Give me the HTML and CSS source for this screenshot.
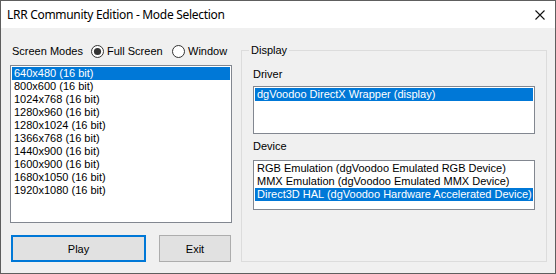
FILE: index.html
```html
<!DOCTYPE html>
<html lang="en">

<head>
    <meta charset="UTF-8">
    <title>LRR Community Edition - Mode Selection</title>
    <link rel="stylesheet" href="styles.css">
</head>

<body>

    <div class="window">
        <div class="titlebar">
            <span class="title">LRR Community Edition - Mode Selection</span>
            <svg class="close" width="10" height="10" viewBox="0 0 10 10">
                <path d="M0.5 0.5 L9.5 9.5 M9.5 0.5 L0.5 9.5" stroke="#111" stroke-width="1.1" fill="none" />
            </svg>
        </div>

        <div class="content">
            <div class="left">
                <div class="modes-head">
                    <span class="caption">Screen Modes</span>
                    <label class="radio wide">
                        <svg width="13" height="13" viewBox="0 0 13 13">
                            <circle cx="6.5" cy="6.5" r="6" fill="#fff" stroke="#333" stroke-width="1" />
                            <circle cx="6.5" cy="6.5" r="3.6" fill="#333" />
                        </svg>
                        Full Screen
                    </label>
                    <label class="radio">
                        <svg width="13" height="13" viewBox="0 0 13 13">
                            <circle cx="6.5" cy="6.5" r="6" fill="#fff" stroke="#333" stroke-width="1" />
                        </svg>
                        Window
                    </label>
                </div>

                <div class="listbox modes">
                    <div class="item sel">640x480 (16 bit)</div>
                    <div class="item">800x600 (16 bit)</div>
                    <div class="item">1024x768 (16 bit)</div>
                    <div class="item">1280x960 (16 bit)</div>
                    <div class="item">1280x1024 (16 bit)</div>
                    <div class="item">1366x768 (16 bit)</div>
                    <div class="item">1440x900 (16 bit)</div>
                    <div class="item">1600x900 (16 bit)</div>
                    <div class="item">1680x1050 (16 bit)</div>
                    <div class="item">1920x1080 (16 bit)</div>
                </div>

                <div class="buttons">
                    <button class="btn default play">Play</button>
                    <button class="btn exit">Exit</button>
                </div>
            </div>

            <fieldset class="group">
                <legend>Display</legend>

                <div class="label">Driver</div>
                <div class="listbox driver">
                    <div class="item sel">dgVoodoo DirectX Wrapper (display)</div>
                </div>

                <div class="label device-label">Device</div>
                <div class="listbox device">
                    <div class="item">RGB Emulation (dgVoodoo Emulated RGB Device)</div>
                    <div class="item">MMX Emulation (dgVoodoo Emulated MMX Device)</div>
                    <div class="item sel">Direct3D HAL (dgVoodoo Hardware Accelerated Device)</div>
                </div>
            </fieldset>
        </div>
    </div>

</body>

</html>
```

FILE: styles.css
```css
body {
    margin: 0;
    font-family: "Liberation Sans", Arial, sans-serif;
    font-size: 11px;
    color: #000;
    background: #f0f0f0;
}

.window {
    width: 556px;
    height: 274px;
    box-sizing: border-box;
    border: 1px solid #5e5e5e;
    background: #f0f0f0;
    display: flex;
    flex-direction: column;
}

.titlebar {
    height: 27px;
    flex: none;
    background: #fff;
    display: flex;
    align-items: center;
    padding: 0 10px 0 6px;
    font-family: "Segoe UI", "Noto Sans", sans-serif;
    font-size: 12px;
    letter-spacing: -0.3px;
}

.title {
    flex: 1;
}

.close {
    display: block;
}

.content {
    display: flex;
    gap: 9px;
    padding-left: 9px;
}

.left {
    width: 222px;
    padding-top: 16px;
    display: flex;
    flex-direction: column;
}

.modes-head {
    height: 14px;
    display: flex;
    align-items: center;
}

.caption {
    width: 81px;
    padding-left: 2px;
    box-sizing: border-box;
}

.radio {
    display: flex;
    align-items: center;
    gap: 3px;
}

.radio svg {
    display: block;
}

.radio.wide {
    width: 81px;
}

.listbox {
    background: #fff;
    border: 1px solid #828790;
    padding: 1px;
    box-sizing: border-box;
}

.item {
    height: 13px;
    line-height: 13px;
    padding-left: 2px;
    white-space: nowrap;
}

.item.sel {
    background: #0078d7;
    color: #fff;
}

.modes {
    margin-top: 7px;
    height: 158px;
}

.buttons {
    display: flex;
    gap: 13px;
    margin-top: 12px;
    padding-left: 1px;
}

.btn {
    height: 27px;
    background: #e1e1e1;
    border: 1px solid #adadad;
    font: inherit;
    color: #000;
    padding: 0;
}

.btn.default {
    border: 2px solid #0078d7;
}

.play {
    width: 135px;
}

.exit {
    width: 72px;
}

.group {
    width: 306px;
    min-width: 0;
    box-sizing: border-box;
    margin: 16px 0 0 0;
    border: 1px solid #dcdcdc;
    padding: 11px 11px 11px;
}

.group legend {
    line-height: 13px;
    padding: 0 2px;
    margin-left: -4px;
}

.label {
    height: 13px;
    line-height: 13px;
}

.driver {
    margin-top: 5px;
    height: 48px;
}

.device-label {
    margin-top: 6px;
}

.device {
    margin-top: 7px;
    height: 50px;
}
```
